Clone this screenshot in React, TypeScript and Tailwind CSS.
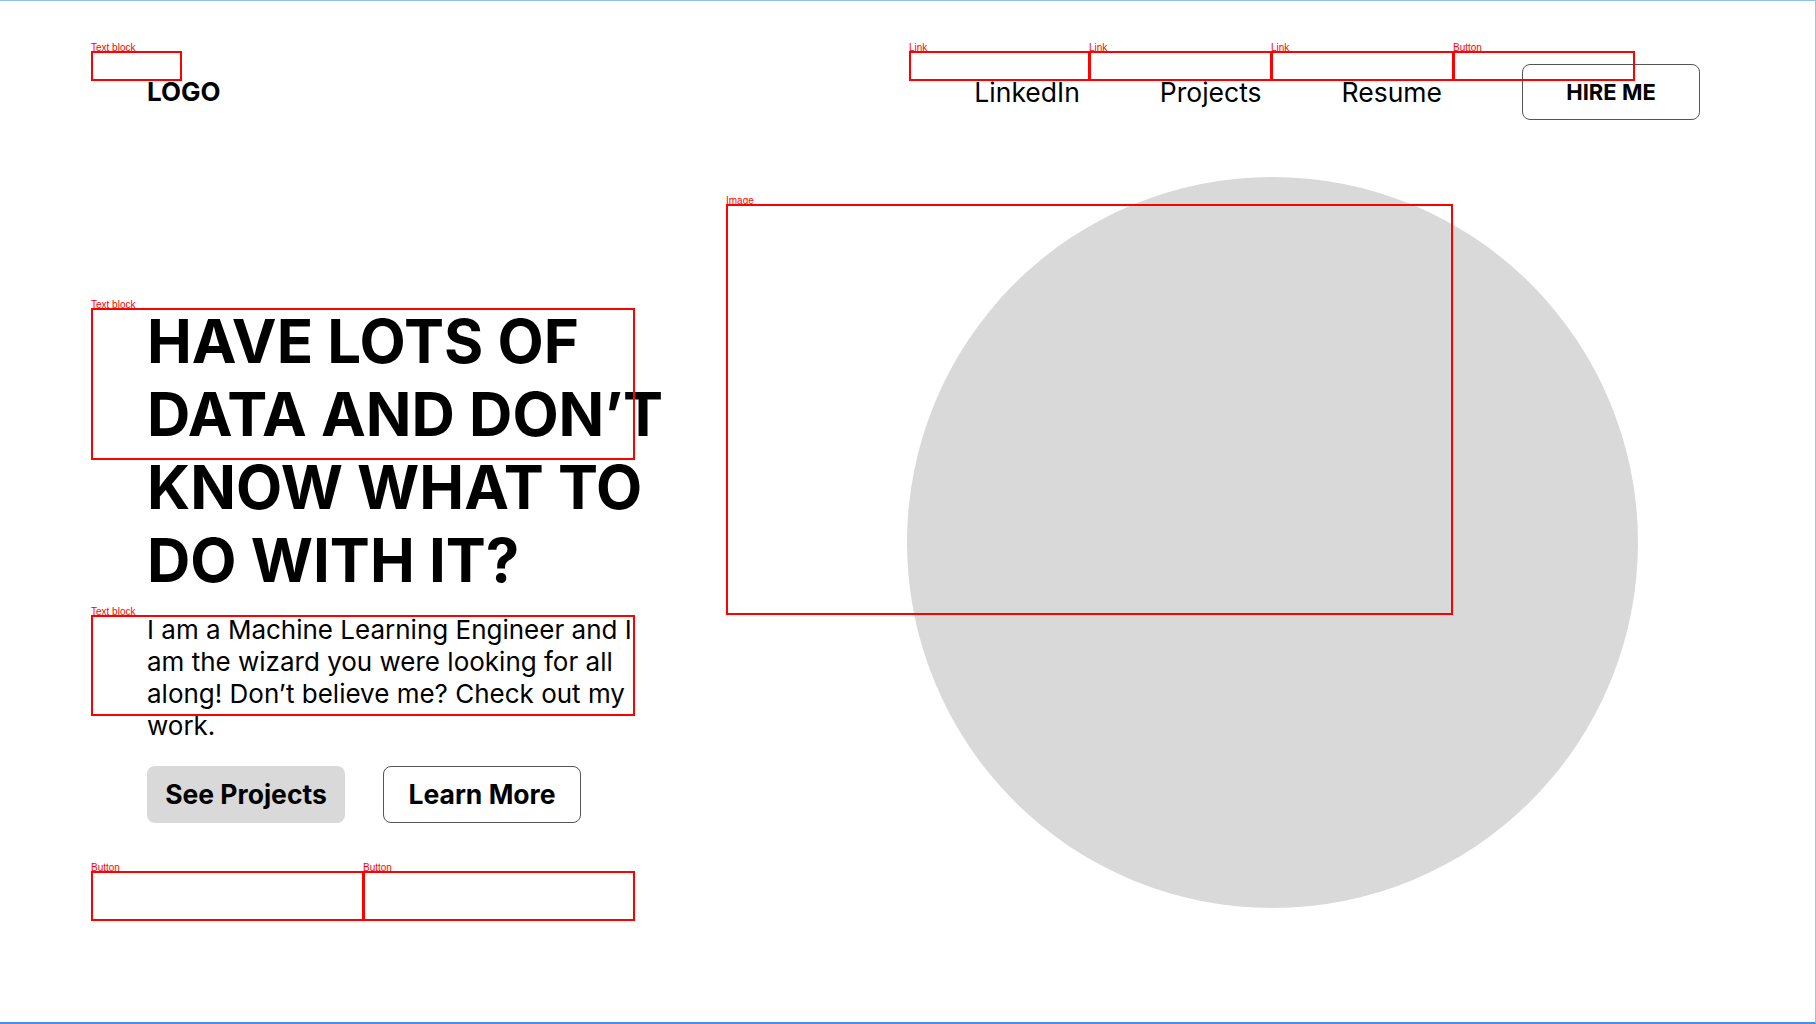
const marks = [
  { label: "Text block", l: 91, t: 51, w: 91, h: 30 },
  { label: "Link", l: 909, t: 51, w: 181, h: 30 },
  { label: "Link", l: 1089, t: 51, w: 183, h: 30 },
  { label: "Link", l: 1271, t: 51, w: 183, h: 30 },
  { label: "Button", l: 1453, t: 51, w: 182, h: 30 },
  { label: "Image", l: 726, t: 204, w: 727, h: 411 },
  { label: "Text block", l: 91, t: 308, w: 544, h: 152 },
  { label: "Text block", l: 91, t: 615, w: 544, h: 101 },
  { label: "Button", l: 91, t: 871, w: 273, h: 50 },
  { label: "Button", l: 363, t: 871, w: 272, h: 50 },
];

const Marks = () => (
  <div className="pointer-events-none absolute inset-0">
    {marks.map((m, i) => (
      <div
        key={i}
        className="absolute border-2 border-[#ff0000]"
        style={{ left: m.l, top: m.t - 1, width: m.w, height: m.h }}
      >
        <span className="absolute bottom-full left-[-2px] whitespace-nowrap font-['Liberation_Sans',Arial,sans-serif] text-[10px] leading-[11px] text-[#ff0000]">
          {m.label}
        </span>
      </div>
    ))}
  </div>
);

export default function App() {
  return (
    <div className="relative h-[1024px] w-[1816px] overflow-hidden border-t border-r border-b-2 border-t-[#8ec1ee] border-r-[#a9bdd3] border-b-[#4a90e2] bg-white font-['Inter','Noto_Sans',sans-serif] text-black">
      <header className="flex items-center justify-between pt-[63px] pl-[147px] pr-[115px]">
        <div className="text-[26px] font-bold leading-8">LOGO</div>
        <nav className="flex items-center gap-[80px]">
          <a href="#" className="text-[26.5px] leading-8">LinkedIn</a>
          <a href="#" className="text-[26.5px] leading-8">Projects</a>
          <a href="#" className="text-[26.5px] leading-8">Resume</a>
          <button className="flex h-[56px] w-[178px] items-center justify-center rounded-lg border border-[#555] text-[22px] font-bold">
            HIRE ME
          </button>
        </nav>
      </header>

      <section className="mt-[57px] flex pl-[147px]">
        <div className="w-[760px] pt-[128px]">
          <h1 className="w-[520px] text-[60px] font-bold leading-[73px]">
            HAVE LOTS OF DATA AND DON’T KNOW WHAT TO DO WITH IT?
          </h1>
          <p className="mt-[17px] w-[515px] text-[26px] leading-8">
            I am a Machine Learning Engineer and I am the wizard you were looking for all along! Don’t believe me? Check out my work.
          </p>
          <div className="mt-[24px] flex gap-[38px]">
            <button className="h-[57px] w-[198px] rounded-lg bg-[#d9d9d9] text-[26.5px] font-bold">
              See Projects
            </button>
            <button className="h-[57px] w-[198px] rounded-lg border border-[#555] text-[26.5px] font-bold">
              Learn More
            </button>
          </div>
        </div>
        <div className="h-[731px] w-[731px] shrink-0 rounded-full bg-[#d9d9d9]" />
      </section>

      <Marks />
    </div>
  );
}
